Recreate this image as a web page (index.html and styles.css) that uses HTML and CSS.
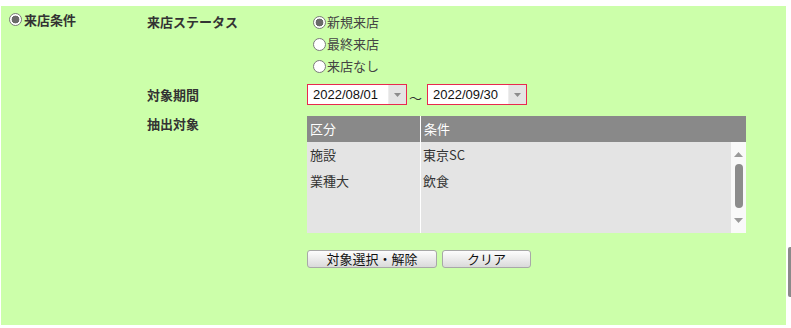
FILE: index.html
```html
<!DOCTYPE html>
<html lang="ja">
<head>
<meta charset="utf-8">
<title>来店条件</title>
<link rel="stylesheet" href="styles.css">
</head>
<body>
<div class="page">
  <section class="panel">
    <div class="cond-title"><span class="radio checked"></span>来店条件</div>
    <div class="fields">
      <div class="label label-status">来店ステータス</div>
      <div class="radios">
        <label class="opt"><span class="radio checked"></span>新規来店</label>
        <label class="opt"><span class="radio"></span>最終来店</label>
        <label class="opt"><span class="radio"></span>来店なし</label>
      </div>

      <div class="label label-period">対象期間</div>
      <div class="period">
        <div class="date"><span class="value">2022/08/01</span><span class="drop"><svg width="7" height="4" viewBox="0 0 7 4"><path d="M0 0H7L3.5 4Z" fill="#8c8c8c"/></svg></span></div>
        <span class="tilde">～</span>
        <div class="date"><span class="value">2022/09/30</span><span class="drop"><svg width="7" height="4" viewBox="0 0 7 4"><path d="M0 0H7L3.5 4Z" fill="#8c8c8c"/></svg></span></div>
      </div>

      <div class="label label-target">抽出対象</div>
      <div class="grid-table">
        <div class="thead">
          <div class="c1">区分</div>
          <div class="c2">条件</div>
        </div>
        <div class="tbody">
          <div class="c1">
            <div class="cell">施設</div>
            <div class="cell">業種大</div>
          </div>
          <div class="c2">
            <div class="cell">東京SC</div>
            <div class="cell">飲食</div>
          </div>
          <div class="vscroll">
            <svg class="arrow" width="9" height="5" viewBox="0 0 9 5"><path d="M0 5H9L4.5 0Z" fill="#9a9a9a"/></svg>
            <div class="thumb"></div>
            <svg class="arrow" width="9" height="5" viewBox="0 0 9 5"><path d="M0 0H9L4.5 5Z" fill="#9a9a9a"/></svg>
          </div>
        </div>
      </div>

      <div class="actions">
        <button class="btn btn-select">対象選択・解除</button>
        <button class="btn btn-clear">クリア</button>
      </div>
    </div>
  </section>
  <div class="side-bar"></div>
</div>
</body>
</html>
```

FILE: styles.css
```css
html, body {
  margin: 0;
  padding: 0;
  background: #fff;
}

body {
  font-family: "Noto Sans CJK JP", "Noto Sans", sans-serif;
  font-size: 13px;
  color: #333;
}

.page {
  display: flex;
  align-items: flex-start;
  padding: 6px 0 0 1px;
}

.panel {
  box-sizing: border-box;
  width: 785px;
  height: 319px;
  background: #ccffaa;
  display: flex;
  align-items: flex-start;
  padding: 5px 0 0 8px;
}

.side-bar {
  width: 3px;
  height: 50px;
  margin: 241px 0 0 2px;
  background: #8a8a8a;
  border-radius: 2px 0 0 2px;
}

.cond-title {
  width: 138px;
  display: flex;
  align-items: center;
  font-weight: bold;
  line-height: 17px;
}

.cond-title .radio {
  margin-right: 2px;
}

.radio {
  box-sizing: border-box;
  display: inline-block;
  width: 13px;
  height: 13px;
  border: 1px solid #7a7a7a;
  border-radius: 50%;
  background: #fff;
  flex: none;
}

.radio.checked {
  background: radial-gradient(circle, #6a6a6a 0, #6a6a6a 3.6px, #fff 4.2px);
}

.fields {
  display: grid;
  grid-template-columns: 160px 439px;
  align-items: start;
}

.label {
  font-weight: bold;
}

.label-status {
  line-height: 22px;
}

.radios {
  display: flex;
  flex-direction: column;
}

.opt {
  display: flex;
  align-items: center;
  height: 22px;
  line-height: 22px;
  padding-left: 6px;
  color: #444;
}

.opt .radio {
  margin-right: 1px;
}

.label-period {
  margin-top: 7px;
  line-height: 21px;
}

.period {
  margin-top: 7px;
  height: 21px;
  display: flex;
  align-items: flex-start;
}

.date {
  box-sizing: border-box;
  width: 100px;
  height: 21px;
  border: 1px solid #e8294f;
  display: flex;
  background: #fff;
}

.date .value {
  flex: 1;
  padding-left: 5px;
  font-family: "Liberation Sans", Arial, sans-serif;
  font-size: 13px;
  line-height: 19px;
  color: #111;
}

.date .drop {
  width: 17px;
  background: #e4e4e4;
  border-left: 1px solid #ededed;
  display: flex;
  align-items: center;
  justify-content: center;
}

.tilde {
  width: 13px;
  margin: 0 5px 0 2px;
  line-height: 14px;
  padding-top: 7px;
  color: #333;
}

.label-target {
  margin-top: 11px;
  line-height: 16px;
}

.grid-table {
  margin-top: 11px;
  width: 439px;
}

.thead {
  display: flex;
  height: 26px;
  background: #898989;
  color: #fff;
  line-height: 26px;
}

.c1 {
  width: 113px;
  border-right: 1px solid #fff;
  flex: none;
}

.thead .c1,
.thead .c2 {
  padding-left: 3px;
  box-sizing: border-box;
}

.thead .c1 {
  width: 114px;
}

.c2 {
  flex: 1;
}

.tbody {
  display: flex;
  height: 91px;
  background: #e4e4e4;
}

.cell {
  line-height: 26px;
  height: 26px;
  padding-left: 3px;
}

.tbody .c2 .cell {
  padding-left: 2px;
}

.vscroll {
  width: 15px;
  background: #f9f9f9;
  display: flex;
  flex-direction: column;
  align-items: center;
  flex: none;
}

.vscroll .arrow {
  display: block;
}

.vscroll .arrow:first-child {
  margin-top: 10px;
}

.thumb {
  width: 8px;
  height: 44px;
  margin: 7px 0 10px;
  background: #8c8c8c;
  border-radius: 4px;
}

.actions {
  grid-column: 2;
  margin-top: 17px;
  display: flex;
  gap: 5px;
}

.btn {
  box-sizing: border-box;
  height: 18px;
  padding: 0;
  border: 1px solid #a8a8a8;
  border-radius: 3px;
  background: linear-gradient(#fdfdfd, #dadada);
  font-family: "Noto Sans CJK JP", sans-serif;
  font-size: 13px;
  line-height: 16px;
  color: #111;
}

.btn-select {
  width: 130px;
}

.btn-clear {
  width: 89px;
}
```
